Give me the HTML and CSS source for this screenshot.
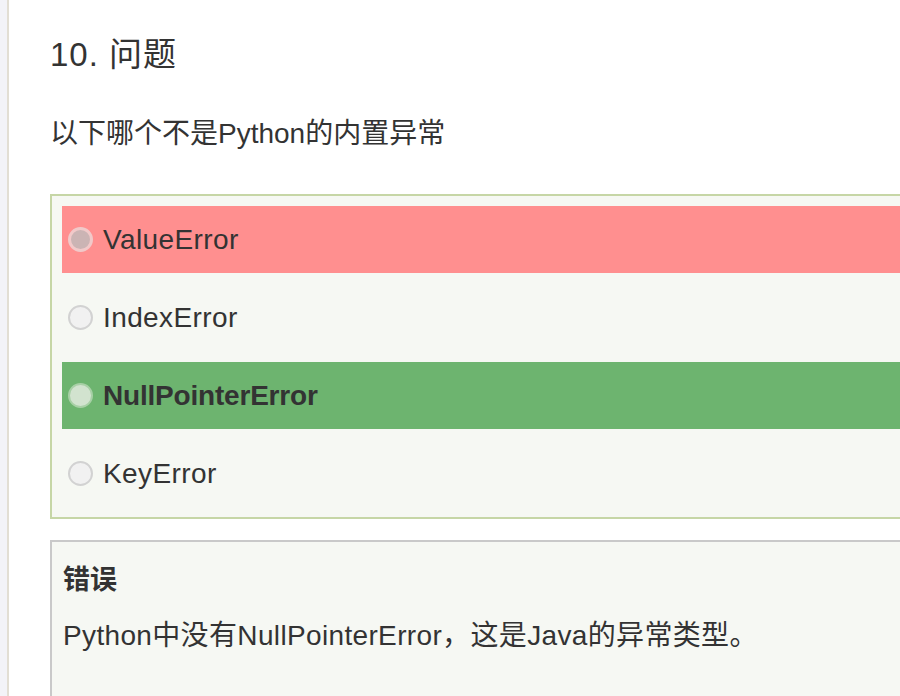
FILE: index.html
```html
<!DOCTYPE html>
<html lang="zh-CN">
<head>
<meta charset="utf-8">
<title>10. 问题</title>
<link rel="stylesheet" href="styles.css">
</head>
<body>
<div class="layout">
  <div class="rail"></div>
  <main class="main">
    <h1 class="title">10. 问题</h1>
    <p class="question">以下哪个不是Python的内置异常</p>
    <div class="options">
      <div class="option wrong"><span class="radio"></span><span class="label">ValueError</span></div>
      <div class="option"><span class="radio"></span><span class="label">IndexError</span></div>
      <div class="option correct"><span class="radio"></span><span class="label">NullPointerError</span></div>
      <div class="option"><span class="radio"></span><span class="label">KeyError</span></div>
    </div>
    <div class="explain">
      <div class="explain-head">错误</div>
      <p class="explain-text">Python中没有NullPointerError，这是Java的异常类型。</p>
    </div>
  </main>
</div>
</body>
</html>
```

FILE: styles.css
```css
html, body {
  margin: 0;
  padding: 0;
  background: #ffffff;
  overflow: hidden;
  height: 100%;
}
body {
  font-family: "Liberation Sans", "Noto Sans CJK SC", sans-serif;
  color: #333333;
}
.layout {
  display: flex;
  min-height: 100%;
}
.rail {
  flex: 0 0 7px;
  background: #f3f3f8;
  border-right: 2px solid #e2ded4;
}
.main {
  flex: 0 0 980px;
  padding-left: 41px;
}
.title {
  margin: 35px 0 0;
  font-size: 33px;
  line-height: 40px;
  font-weight: normal;
  letter-spacing: 1px;
}
.question {
  margin: 39px 0 0;
  font-size: 28px;
  line-height: 40px;
}
.options {
  margin-top: 40px;
  border: 2px solid #c6d6a6;
  background: #f6f8f3;
  padding: 10px;
  display: flex;
  flex-direction: column;
  gap: 11px;
}
.option {
  height: 67px;
  display: flex;
  align-items: center;
  gap: 10px;
  padding-left: 6px;
  font-size: 28px;
  letter-spacing: 0.4px;
}
.option.wrong { background: #ff8f8f; }
.option.correct { background: #6db46f; font-weight: bold; letter-spacing: -0.2px; }
.radio {
  width: 21px;
  height: 21px;
  border-radius: 50%;
  border: 2px solid #d2d2d2;
  background: #f1f1f1;
  flex: 0 0 auto;
}
.wrong .radio {
  background: #cbb4b4;
  border: 3px solid #f1c9c9;
  width: 19px;
  height: 19px;
}
.correct .radio {
  background: #d2e3cf;
  border-color: #a8d0a6;
}
.label { line-height: 1; }
.explain {
  margin-top: 21px;
  border: 2px solid #c9c9c9;
  background: #f6f8f3;
  padding: 20px 11px 60px;
}
.explain-head {
  font-weight: bold;
  font-size: 27px;
  line-height: 36px;
}
.explain-text {
  margin: 20px 0 0;
  font-size: 28px;
  line-height: 36px;
  letter-spacing: 0.35px;
}
```
